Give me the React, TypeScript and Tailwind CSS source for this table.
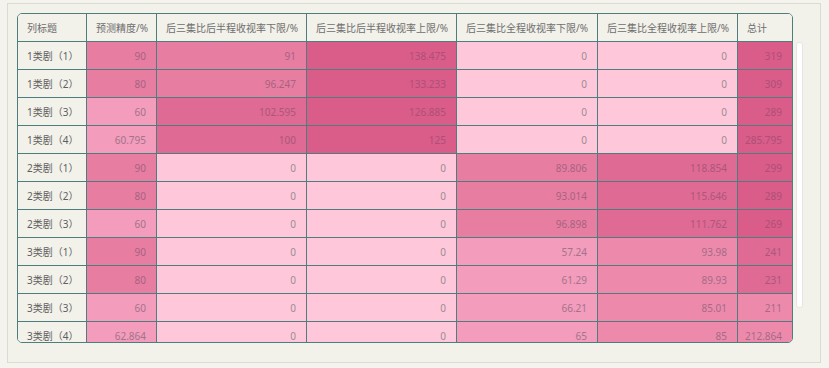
import React from 'react';

// heat levels: 0 = lightest pink, 5 = darkest
const levelClass: Record<number, string> = {
  0: 'bg-[#fec8da] text-[#9c8c94]',
  1: 'bg-[#f49cbc] text-[#a2748a]',
  2: 'bg-[#ed8aac] text-[#a66a85]',
  3: 'bg-[#e77ea2] text-[#a8627f]',
  4: 'bg-[#df6a93] text-[#ab577b]',
  5: 'bg-[#d95d88] text-[#ae4f77]',
};

const headers = [
  '列标题',
  '预测精度/%',
  '后三集比后半程收视率下限/%',
  '后三集比后半程收视率上限/%',
  '后三集比全程收视率下限/%',
  '后三集比全程收视率上限/%',
  '总计',
];

type Cell = [string, number];

const rows: { label: string; cells: Cell[] }[] = [
  { label: '1类剧（1）', cells: [['90', 3], ['91', 3], ['138.475', 5], ['0', 0], ['0', 0], ['319', 5]] },
  { label: '1类剧（2）', cells: [['80', 3], ['96.247', 3], ['133.233', 5], ['0', 0], ['0', 0], ['309', 5]] },
  { label: '1类剧（3）', cells: [['60', 1], ['102.595', 4], ['126.885', 5], ['0', 0], ['0', 0], ['289', 5]] },
  { label: '1类剧（4）', cells: [['60.795', 1], ['100', 4], ['125', 5], ['0', 0], ['0', 0], ['285.795', 5]] },
  { label: '2类剧（1）', cells: [['90', 3], ['0', 0], ['0', 0], ['89.806', 3], ['118.854', 4], ['299', 5]] },
  { label: '2类剧（2）', cells: [['80', 3], ['0', 0], ['0', 0], ['93.014', 3], ['115.646', 4], ['289', 5]] },
  { label: '2类剧（3）', cells: [['60', 1], ['0', 0], ['0', 0], ['96.898', 3], ['111.762', 4], ['269', 5]] },
  { label: '3类剧（1）', cells: [['90', 3], ['0', 0], ['0', 0], ['57.24', 1], ['93.98', 2], ['241', 4]] },
  { label: '3类剧（2）', cells: [['80', 3], ['0', 0], ['0', 0], ['61.29', 1], ['89.93', 2], ['231', 4]] },
  { label: '3类剧（3）', cells: [['60', 1], ['0', 0], ['0', 0], ['66.21', 1], ['85.01', 2], ['211', 2]] },
  { label: '3类剧（4）', cells: [['62.864', 1], ['0', 0], ['0', 0], ['65', 1], ['85', 2], ['212.864', 2]] },
];

export default function App() {
  return (
    <div
      className="w-[829px] h-[368px] bg-[#f4f3ed] pt-[3px] pl-[7px]"
      style={{ fontFamily: '"Noto Sans", "Noto Sans CJK SC", sans-serif' }}
    >
      <div className="w-[814px] h-[360px] border border-[#dcdbd1] bg-[#f2f1ea] pt-[9px] pl-[9px] flex items-start gap-[3px]">
        {/* table */}
        <div className="h-[330px] overflow-hidden rounded-[5px] border border-[#4f7d7e]">
          <div className="grid grid-cols-[69px_70px_150px_150px_141px_140px_54px] text-[10px] leading-none">
            {headers.map((h, i) => (
              <div
                key={h}
                className={`h-[28px] flex items-center pl-[9px] bg-[#f2f1ea] text-[#6e6e6e] border-b border-[#4f7d7e] ${i < 6 ? 'border-r' : ''}`}
              >
                {h}
              </div>
            ))}
            {rows.map(r => (
              <React.Fragment key={r.label}>
                <div className="h-[28px] flex items-center pl-[9px] bg-[#f2f1ea] text-[#5e5e5e] border-b border-r border-[#4f7d7e]">
                  {r.label}
                </div>
                {r.cells.map(([v, lvl], j) => (
                  <div
                    key={j}
                    className={`h-[28px] flex items-center justify-end pr-[10px] border-b border-[#4f7d7e] ${j < 5 ? 'border-r' : ''} ${levelClass[lvl]}`}
                  >
                    {v}
                  </div>
                ))}
              </React.Fragment>
            ))}
          </div>
        </div>
        {/* scrollbar thumb */}
        <div className="mt-[29px] w-[7px] h-[266px] rounded-[3px] bg-white border border-[#e6e6e0]" />
      </div>
    </div>
  );
}
